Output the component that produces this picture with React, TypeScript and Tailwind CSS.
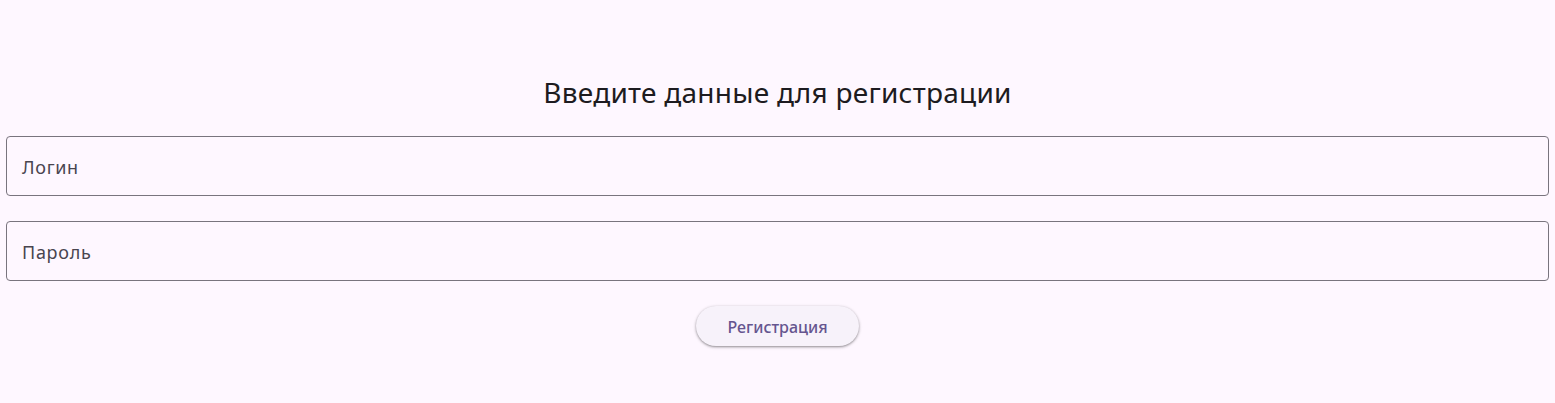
import React from "react";

export default function App() {
  return (
    <div className="min-h-[403px] w-full bg-[#fef7ff] px-[6px] pt-[70px]" style={{ fontFamily: '"Noto Sans", "Open Sans", sans-serif' }}>
      <div className="flex flex-col items-center">
        <h1 className="text-[28px] leading-[44px] tracking-[0.25px] text-[#1d1b20] font-normal">Введите данные для регистрации</h1>
        <div className="mt-[22px] flex w-full flex-col gap-[25px]">
          <div className="flex h-[60px] w-full items-center rounded-[4px] border border-[#79747e] px-[15px] pt-[3px]">
            <span className="text-[18px] text-[#49454f] tracking-[0.7px]">Логин</span>
          </div>
          <div className="flex h-[60px] w-full items-center rounded-[4px] border border-[#79747e] px-[15px] pt-[3px]">
            <span className="text-[18px] text-[#49454f] tracking-[0.7px]">Пароль</span>
          </div>
        </div>
        <button className="mt-[25px] flex h-[40px] w-[163px] items-center justify-center rounded-full bg-[#f7f2fa] pt-[2px] text-[16px] font-medium text-[#65558f] shadow-[0_1px_2px_rgba(0,0,0,0.3),0_1px_3px_1px_rgba(0,0,0,0.12)]">
          Регистрация
        </button>
      </div>
    </div>
  );
}
